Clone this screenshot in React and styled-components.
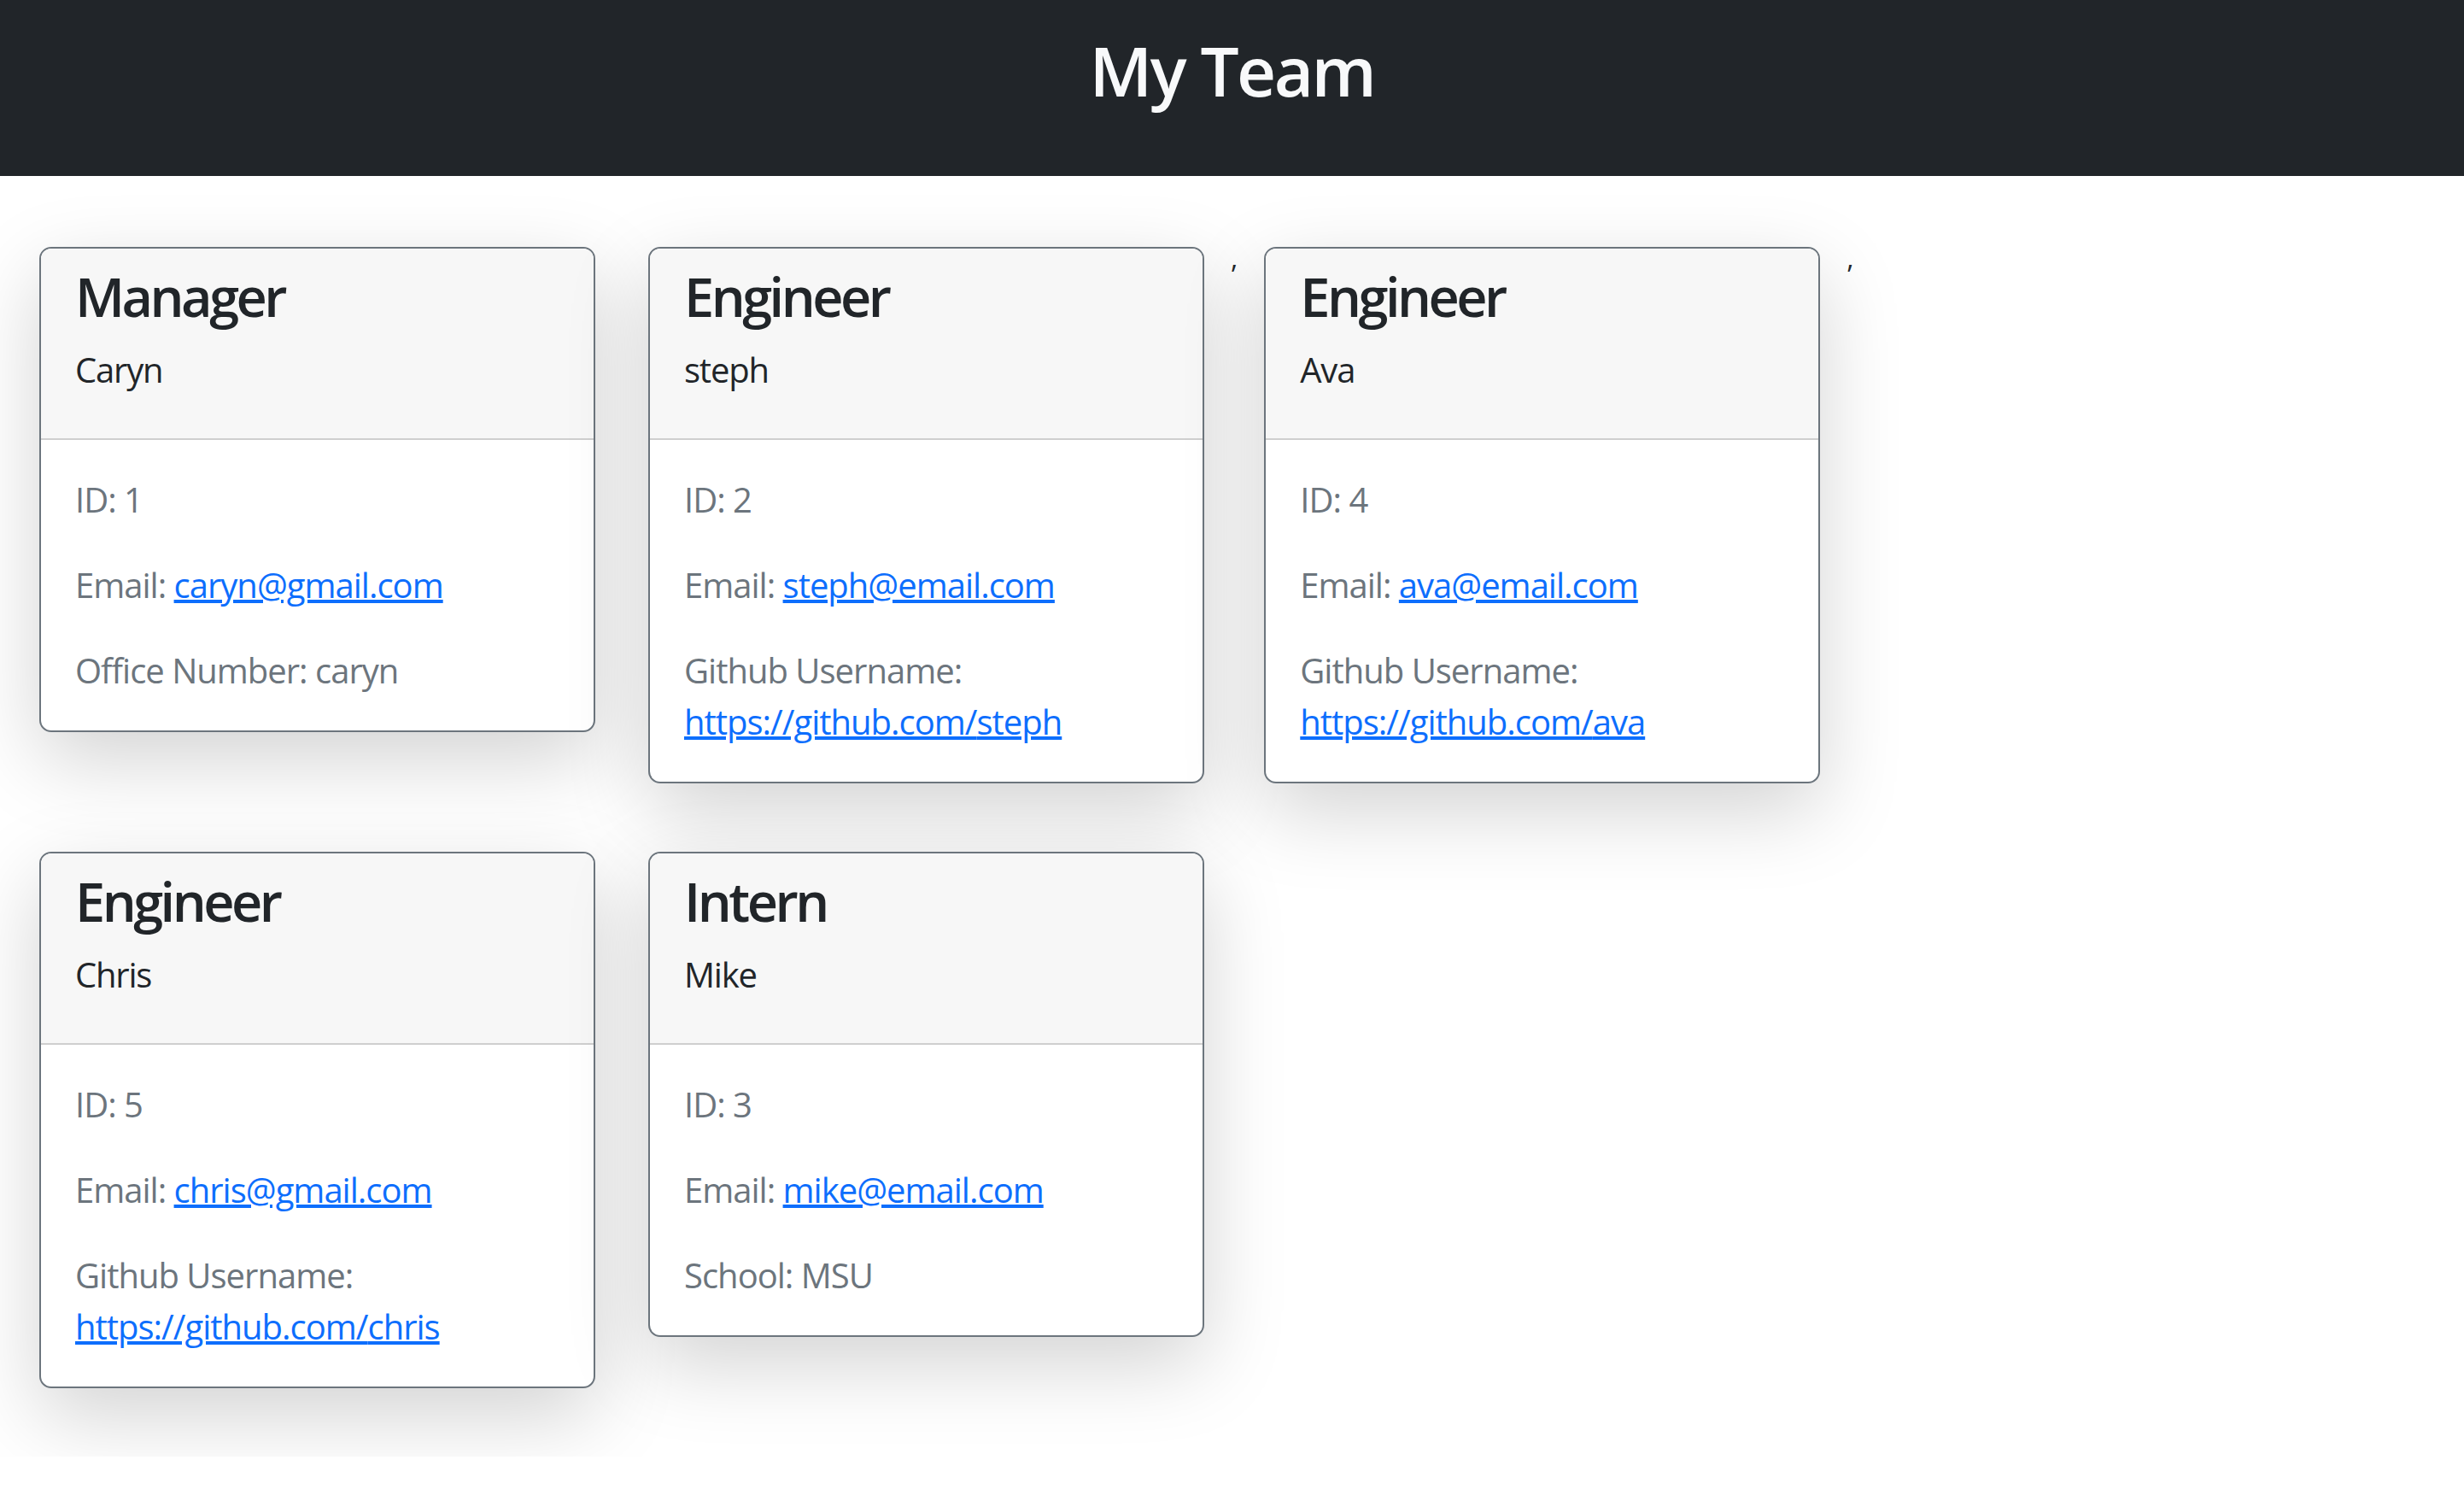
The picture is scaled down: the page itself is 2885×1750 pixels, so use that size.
import React from 'react';
import styled, { createGlobalStyle } from 'styled-components';

const GlobalStyle = createGlobalStyle`
    html, body {
        margin: 0;
        padding: 0;
        background: #ffffff;
    }

    body {
        font-family: "Open Sans", "Noto Sans", "Liberation Sans", sans-serif;
        color: #212529;
    }
`;

const Jumbo = styled.header`
    height: 206px;
    box-sizing: border-box;
    padding-top: 34px;
    background: #212529;
    text-align: center;
`;

const Title = styled.h1`
    margin: 0;
    font-size: 80px;
    line-height: 96px;
    font-weight: 600;
    letter-spacing: -2.5px;
    color: #f8f9fa;
`;

const Deck = styled.main`
    display: flex;
    flex-wrap: wrap;
    align-items: flex-start;
    max-width: 2500px;
    padding: 83px 0 0 15px;
`;

const Card = styled.div`
    width: 651px;
    box-sizing: border-box;
    margin: 0 31px 80px 31px;
    border: 2px solid #6c757d;
    border-radius: 14px;
    overflow: hidden;
    background: #fff;
    box-shadow: 0 32px 96px rgba(0, 0, 0, 0.175);
`;

const CardHeader = styled.div`
    padding: 17px 40px 50px 40px;
    background: #f7f7f7;
    border-bottom: 2px solid #cfcfcf;
`;

const Role = styled.h2`
    margin: 0 0 18px 0;
    font-size: 63px;
    line-height: 77px;
    font-weight: 600;
    letter-spacing: -3.5px;
    color: #212529;
`;

const Name = styled.div`
    font-size: 40px;
    line-height: 60px;
    letter-spacing: -1.2px;
    color: #212529;
`;

const CardBody = styled.div`
    padding: 40px;
`;

const Line = styled.p`
    margin: 0 0 40px 0;
    font-size: 40px;
    line-height: 60px;
    letter-spacing: -1px;
    color: #6c757d;

    &:last-child {
        margin-bottom: 0;
    }

    a {
        color: #0d6efd;
        text-decoration: underline;
    }
`;

const Sep = styled.span`
    margin-top: -11px;
    font-size: 32px;
    line-height: 48px;
    color: #212529;
`;

const manager = { role: 'Manager', name: 'Caryn', id: 1, email: 'caryn@gmail.com', office: 'caryn' };
const engineers = [
    { role: 'Engineer', name: 'steph', id: 2, email: 'steph@email.com', github: 'steph' },
    { role: 'Engineer', name: 'Ava', id: 4, email: 'ava@email.com', github: 'ava' },
    { role: 'Engineer', name: 'Chris', id: 5, email: 'chris@gmail.com', github: 'chris' },
];
const intern = { role: 'Intern', name: 'Mike', id: 3, email: 'mike@email.com', school: 'MSU' };

function EmployeeCard({ person }) {
    return (
        <Card>
            <CardHeader>
                <Role>{person.role}</Role>
                <Name>{person.name}</Name>
            </CardHeader>
            <CardBody>
                <Line>ID: {person.id}</Line>
                <Line>Email: <a href={'mailto:' + person.email}>{person.email}</a></Line>
                {person.office && <Line>Office Number: {person.office}</Line>}
                {person.github && (
                    <Line>
                        Github Username:<br />
                        <a href={'https://github.com/' + person.github}>https://github.com/{person.github}</a>
                    </Line>
                )}
                {person.school && <Line>School: {person.school}</Line>}
            </CardBody>
        </Card>
    );
}

export default function App() {
    return (
        <>
            <GlobalStyle />
            <Jumbo>
                <Title>My Team</Title>
            </Jumbo>
            <Deck>
                <EmployeeCard person={manager} />
                {engineers.map((e, i) => (
                    <React.Fragment key={e.id}>
                        <EmployeeCard person={e} />
                        {i < engineers.length - 1 && <Sep>,</Sep>}
                    </React.Fragment>
                ))}
                <EmployeeCard person={intern} />
            </Deck>
        </>
    );
}
